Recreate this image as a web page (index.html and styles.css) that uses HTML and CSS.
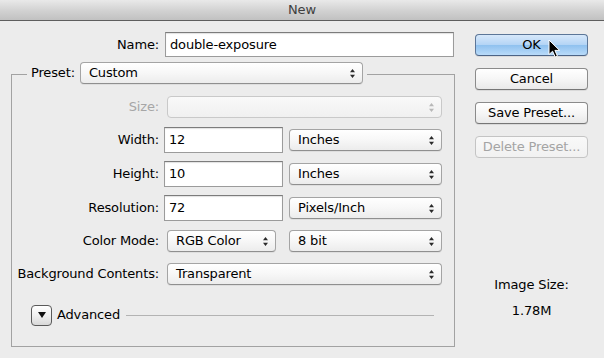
FILE: index.html
```html
<!DOCTYPE html>
<html>
<head>
<meta charset="utf-8">
<title>New</title>
<link rel="stylesheet" href="styles.css">
</head>
<body>
<div class="window">
  <div class="titlebar">New</div>
  <div class="content">
    <div class="main">
      <div class="name-row">
        <label class="name-label">Name:</label>
        <div class="input name-input">double-exposure</div>
      </div>
      <fieldset class="group">
        <legend class="legend">
          <div class="legend-inner">
            <span class="preset-label">Preset:</span>
            <div class="select preset-select"><span>Custom</span><svg class="arr" width="5" height="9" viewBox="0 0 5 9"><path d="M2.5 0L5 3.2H0Z M0 5.8H5L2.5 9Z"/></svg></div>
          </div>
        </legend>
        <div class="rows">
          <div class="row">
            <span class="lbl disabled">Size:</span>
            <div class="select wide disabled-sel"><span></span><svg class="arr" width="5" height="9" viewBox="0 0 5 9"><path d="M2.5 0L5 3.2H0Z M0 5.8H5L2.5 9Z"/></svg></div>
          </div>
          <div class="row gap7">
            <span class="lbl">Width:</span>
            <div class="input num">12</div>
            <div class="select unit"><span>Inches</span><svg class="arr" width="5" height="9" viewBox="0 0 5 9"><path d="M2.5 0L5 3.2H0Z M0 5.8H5L2.5 9Z"/></svg></div>
          </div>
          <div class="row gap8">
            <span class="lbl">Height:</span>
            <div class="input num">10</div>
            <div class="select unit"><span>Inches</span><svg class="arr" width="5" height="9" viewBox="0 0 5 9"><path d="M2.5 0L5 3.2H0Z M0 5.8H5L2.5 9Z"/></svg></div>
          </div>
          <div class="row gap8">
            <span class="lbl">Resolution:</span>
            <div class="input num">72</div>
            <div class="select unit"><span>Pixels/Inch</span><svg class="arr" width="5" height="9" viewBox="0 0 5 9"><path d="M2.5 0L5 3.2H0Z M0 5.8H5L2.5 9Z"/></svg></div>
          </div>
          <div class="row gap7">
            <span class="lbl">Color Mode:</span>
            <div class="select mode"><span>RGB Color</span><svg class="arr" width="5" height="9" viewBox="0 0 5 9"><path d="M2.5 0L5 3.2H0Z M0 5.8H5L2.5 9Z"/></svg></div>
            <div class="select unit"><span>8 bit</span><svg class="arr" width="5" height="9" viewBox="0 0 5 9"><path d="M2.5 0L5 3.2H0Z M0 5.8H5L2.5 9Z"/></svg></div>
          </div>
          <div class="row gap7">
            <span class="lbl">Background Contents:</span>
            <div class="select wide"><span>Transparent</span><svg class="arr" width="5" height="9" viewBox="0 0 5 9"><path d="M2.5 0L5 3.2H0Z M0 5.8H5L2.5 9Z"/></svg></div>
          </div>
          <div class="adv-row">
            <div class="disclosure"><svg width="8" height="6" viewBox="0 0 8 6"><path d="M0 0H8L4 6Z"/></svg></div>
            <span class="adv-text">Advanced</span>
            <div class="adv-line"></div>
          </div>
        </div>
      </fieldset>
    </div>
    <div class="side">
      <div class="btn default">OK</div>
      <div class="btn">Cancel</div>
      <div class="btn">Save Preset...</div>
      <div class="btn btn-disabled">Delete Preset...</div>
      <div class="size-info">
        <div>Image Size:</div>
        <div class="size-val">1.78M</div>
      </div>
    </div>
  </div>
  <svg class="cursor" width="13" height="19" viewBox="0 0 13 19"><path d="M1 1V15.5L4.6 12.2L7.2 18L9.4 17L6.9 11.4H11.6Z" fill="#000" stroke="#fff" stroke-width="1" stroke-linejoin="round"/></svg>
</div>
</body>
</html>
```
FILE: styles.css
```css
* { box-sizing: border-box; }
html, body { margin: 0; padding: 0; }
body {
  width: 604px;
  height: 358px;
  overflow: hidden;
  background: #ececec;
  font-family: "DejaVu Sans", "Liberation Sans", sans-serif;
  font-size: 13px;
  line-height: 16px;
  letter-spacing: -0.15px;
  color: #000;
}
.window {
  position: relative;
  width: 604px;
  height: 358px;
  background: #ececec;
}
.titlebar {
  height: 21px;
  background: linear-gradient(#e9e9e9, #d3d3d3 50%, #c1c1c1);
  border-bottom: 1px solid #5e5e5e;
  text-align: center;
  color: #3f3f3f;
  line-height: 20px;
  font-size: 13px;
}
.content {
  display: flex;
}
.main {
  width: 455px;
  padding-top: 11px;
  display: flex;
  flex-direction: column;
}
.name-row {
  display: flex;
  align-items: center;
  height: 25px;
}
.name-label {
  width: 159px;
  text-align: right;
  margin-right: 6px;
}
.input {
  background: #fff;
  border: 1px solid #9b9b9b;
  border-top-color: #7c7c7c;
  box-shadow: inset 0 1px 1px rgba(0,0,0,0.12);
  padding-left: 4px;
  display: flex;
  align-items: center;
}
.name-input {
  width: 289px;
  height: 25px;
}
.group {
  margin: 5px 0 0 11px;
  width: 444px;
  padding: 7px 0 20px 0;
  border: 1px solid #a2a2a2;
  min-width: 0;
}
.legend {
  margin-left: 15px;
  padding: 0 4px;
}
.legend-inner {
  display: flex;
  align-items: flex-start;
  height: 25px;
}
.preset-label {
  margin-right: 5px;
  line-height: 22px;
}
.select {
  height: 22px;
  border: 1px solid #a4a4a4;
  border-bottom-color: #8f8f8f;
  border-radius: 4px;
  background: linear-gradient(#ffffff, #f7f7f7 50%, #ececec);
  box-shadow: 0 1px 0 rgba(0,0,0,0.06);
  display: flex;
  align-items: center;
  padding: 0 7px 0 8px;
}
.select span { flex: 1; }
.arr { fill: #2a2a2a; flex: none; }
.preset-select { width: 283px; }
.rows { display: flex; flex-direction: column; }
.row {
  display: flex;
  align-items: center;
  height: 26px;
}
.gap7 { margin-top: 7px; }
.gap8 { margin-top: 8px; }
.lbl {
  width: 147px;
  text-align: right;
  margin-right: 5px;
  white-space: nowrap;
}
.disabled { color: #a6a6a6; }
.num {
  width: 119px;
  height: 26px;
}
.unit {
  width: 153px;
  margin-left: 6px;
}
.wide {
  width: 275px;
  margin-left: 3px;
}
.mode {
  width: 109px;
  margin-left: 3px;
}
.mode + .unit { margin-left: 13px; }
.disabled-sel {
  border-color: #c9c9c9;
  background: linear-gradient(#f9f9f9, #f0f0f0);
  box-shadow: none;
}
.disabled-sel .arr { fill: #b8b8b8; }
.adv-row {
  display: flex;
  align-items: center;
  height: 22px;
  margin-top: 17px;
  padding-left: 19px;
}
.disclosure {
  width: 21px;
  height: 21px;
  border: 1px solid #5a5a5a;
  border-radius: 4px;
  background: linear-gradient(#ffffff, #f0f0f0 50%, #d8d8d8);
  display: flex;
  align-items: center;
  justify-content: center;
}
.disclosure svg { fill: #111; }
.adv-text { margin-left: 5px; }
.adv-line {
  flex: 1;
  height: 1px;
  background: #b3b3b3;
  margin: 0 20px 0 6px;
}
.side {
  width: 113px;
  margin-left: 20px;
  padding-top: 13px;
  display: flex;
  flex-direction: column;
  gap: 12px;
}
.btn {
  height: 22px;
  border: 1px solid #8b8b8b;
  border-bottom-color: #767676;
  border-radius: 4px;
  background: linear-gradient(#ffffff, #f6f6f6 50%, #e9e9e9);
  box-shadow: 0 1px 0 rgba(0,0,0,0.08);
  text-align: center;
  line-height: 20px;
}
.default {
  border-color: #5c7698;
  border-bottom-color: #4c6486;
  background: linear-gradient(#d7e8fa, #b3d4f5 50%, #8fc1ef 51%, #b9dbf9);
}
.btn-disabled {
  color: #a4a4a4;
  border-color: #c4c4c4;
  background: linear-gradient(#f9f9f9, #f1f1f1);
  box-shadow: none;
}
.size-info {
  margin-top: 107px;
  text-align: center;
  display: flex;
  flex-direction: column;
  gap: 10px;
}
.cursor {
  position: absolute;
  left: 548px;
  top: 39px;
}
```
